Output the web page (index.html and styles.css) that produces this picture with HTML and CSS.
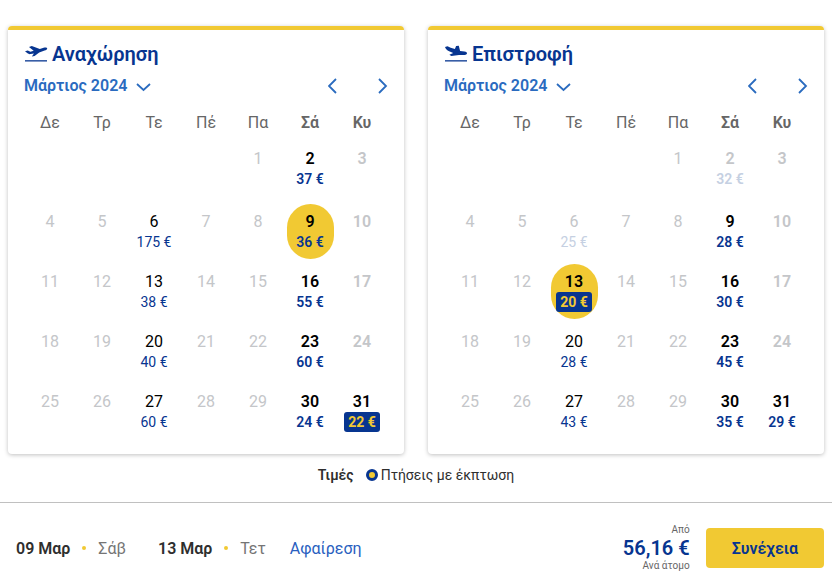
FILE: index.html
```
<!DOCTYPE html>
<html lang="el">
<head>
    <meta charset="utf-8">
    <meta name="viewport" content="width=device-width, initial-scale=1">
    <title>Επιλογή ημερομηνιών</title>
    <link rel="stylesheet" href="styles.css">
</head>
<body>
    <main class="calendars">
        <section class="panel">
            <h2 class="panel-title">
                <svg class="plane" viewBox="0 0 24 18" aria-hidden="true"><path d="M1 6.300l2.800-.7 2.600 1.200 3.300-1L5 1.900l2.800-.9 8 3.100 3.800-1.300c1.600-.5 3.300-.4 3.600.4.2 1-1.200 1.900-2.600 2.400l-5.400 2-4.600 3.400-2.700.5 2-3-3.300.6c-1.600.2-2.300-.2-3.100-.8z"/><path d="M1 15.200h22v1.300H1z"/></svg>
                Αναχώρηση
            </h2>
            <div class="month-bar">
                <div class="month">
                    <select class="month-select" aria-label="Μήνας αναχώρησης"><option>Μάρτιος 2024</option></select>
                    <svg class="chevron" viewBox="0 0 16 10" aria-hidden="true"><path d="M1 2l6.500 6L14 2"/></svg>
                </div>
                <div class="arrows">
                    <button class="arrow" aria-label="Προηγούμενος μήνας"><svg viewBox="0 0 10 16" aria-hidden="true"><path d="M8 1L1 8l7 7"/></svg></button>
                    <button class="arrow" aria-label="Επόμενος μήνας"><svg viewBox="0 0 10 16" aria-hidden="true"><path d="M1 1l7 7-7 7"/></svg></button>
                </div>
            </div>
            <table class="days">
                <thead>
                    <tr><th>Δε</th><th>Τρ</th><th>Τε</th><th>Πέ</th><th>Πα</th><th>Σά</th><th>Κυ</th></tr>
                </thead>
                <tbody>
                    <tr>
                        <td></td><td></td><td></td><td></td><td>1</td>
                        <td><button class="day">2<span class="price">37 €</span></button></td>
                        <td>3</td>
                    </tr>
                    <tr>
                        <td>4</td><td>5</td>
                        <td><button class="day">6<span class="price">175 €</span></button></td>
                        <td>7</td><td>8</td>
                        <td><button class="day selected" aria-pressed="true">9<span class="price">36 €</span></button></td>
                        <td>10</td>
                    </tr>
                    <tr>
                        <td>11</td><td>12</td>
                        <td><button class="day">13<span class="price">38 €</span></button></td>
                        <td>14</td><td>15</td>
                        <td><button class="day">16<span class="price">55 €</span></button></td>
                        <td>17</td>
                    </tr>
                    <tr>
                        <td>18</td><td>19</td>
                        <td><button class="day">20<span class="price">40 €</span></button></td>
                        <td>21</td><td>22</td>
                        <td><button class="day">23<span class="price">60 €</span></button></td>
                        <td>24</td>
                    </tr>
                    <tr>
                        <td>25</td><td>26</td>
                        <td><button class="day">27<span class="price">60 €</span></button></td>
                        <td>28</td><td>29</td>
                        <td><button class="day">30<span class="price">24 €</span></button></td>
                        <td><button class="day">31<span class="price deal">22 €</span></button></td>
                    </tr>
                </tbody>
            </table>
        </section>

        <section class="panel">
            <h2 class="panel-title">
                <svg class="plane" viewBox="0 0 24 18" aria-hidden="true"><path d="M1 2l2.500-.8 3.200 1.500 4.200 1.400 1.200-3 2.700-.3 1.300 5.200 4.400.4c1.700.2 2.700 1.100 2.500 2-.3 1-2 1.500-3.800 1.500l-4.200.1-7.700.9-1.900-1.200 3.800-1.700-4.600-1.900C2.700 5.200 1.600 3.700 1 2z"/><path d="M1 15.200h22v1.300H1z"/></svg>
                Επιστροφή
            </h2>
            <div class="month-bar">
                <div class="month">
                    <select class="month-select" aria-label="Μήνας επιστροφής"><option>Μάρτιος 2024</option></select>
                    <svg class="chevron" viewBox="0 0 16 10" aria-hidden="true"><path d="M1 2l6.500 6L14 2"/></svg>
                </div>
                <div class="arrows">
                    <button class="arrow" aria-label="Προηγούμενος μήνας"><svg viewBox="0 0 10 16" aria-hidden="true"><path d="M8 1L1 8l7 7"/></svg></button>
                    <button class="arrow" aria-label="Επόμενος μήνας"><svg viewBox="0 0 10 16" aria-hidden="true"><path d="M1 1l7 7-7 7"/></svg></button>
                </div>
            </div>
            <table class="days">
                <thead>
                    <tr><th>Δε</th><th>Τρ</th><th>Τε</th><th>Πέ</th><th>Πα</th><th>Σά</th><th>Κυ</th></tr>
                </thead>
                <tbody>
                    <tr>
                        <td></td><td></td><td></td><td></td><td>1</td>
                        <td><button class="day" disabled>2<span class="price">32 €</span></button></td>
                        <td>3</td>
                    </tr>
                    <tr>
                        <td>4</td><td>5</td>
                        <td><button class="day" disabled>6<span class="price">25 €</span></button></td>
                        <td>7</td><td>8</td>
                        <td><button class="day">9<span class="price">28 €</span></button></td>
                        <td>10</td>
                    </tr>
                    <tr>
                        <td>11</td><td>12</td>
                        <td><button class="day selected" aria-pressed="true">13<span class="price deal">20 €</span></button></td>
                        <td>14</td><td>15</td>
                        <td><button class="day">16<span class="price">30 €</span></button></td>
                        <td>17</td>
                    </tr>
                    <tr>
                        <td>18</td><td>19</td>
                        <td><button class="day">20<span class="price">28 €</span></button></td>
                        <td>21</td><td>22</td>
                        <td><button class="day">23<span class="price">45 €</span></button></td>
                        <td>24</td>
                    </tr>
                    <tr>
                        <td>25</td><td>26</td>
                        <td><button class="day">27<span class="price">43 €</span></button></td>
                        <td>28</td><td>29</td>
                        <td><button class="day">30<span class="price">35 €</span></button></td>
                        <td><button class="day">31<span class="price">29 €</span></button></td>
                    </tr>
                </tbody>
            </table>
        </section>
    </main>

    <div class="legend">
        <b>Τιμές</b>
        <span class="legend-item"><i class="ring"></i>Πτήσεις με έκπτωση</span>
    </div>

    <footer class="summary">
        <div class="dates">
            <div class="date"><b>09 Μαρ</b><i class="dot"></i><span>Σάβ</span></div>
            <div class="date"><b>13 Μαρ</b><i class="dot"></i><span>Τετ</span></div>
            <a class="remove" href="#">Αφαίρεση</a>
        </div>
        <div class="total">
            <small>Από</small>
            <strong>56,16 €</strong>
            <small>Ανά άτομο</small>
        </div>
        <button class="continue">Συνέχεια</button>
    </footer>
</body>
</html>
```
FILE: styles.css
```
* {
    box-sizing: border-box;
}

body {
    margin: 0;
    background-color: #fff;
    color: #2e2e2e;
    font-family: Roboto, "Liberation Sans", sans-serif;
    font-size: 16px;
}

button, select {
    font: inherit;
    border: 0;
    padding: 0;
    background: none;
    cursor: pointer;
}

.calendars {
    display: grid;
    grid-template-columns: 1fr 1fr;
    gap: 24px;
    padding: 26px 8px 0;
}

/* calendar panel */
.panel {
    padding: 12px 16px 10px;
    border-top: 4px solid #f1c933;
    border-radius: 4px;
    box-shadow: 0 1px 4px rgba(0, 0, 0, 0.25);
}

.panel-title {
    display: flex;
    align-items: center;
    gap: 4px;
    margin: 0 0 4px;
    color: #073590;
    font-size: 20px;
    font-weight: 600;
    line-height: 24px;
}

.plane {
    width: 24px;
    height: 18px;
    fill: #073590;
}

.month-bar {
    display: flex;
    justify-content: space-between;
    align-items: center;
    height: 32px;
}

.month {
    position: relative;
}

.month-select {
    appearance: none;
    padding-right: 24px;
    color: #2a6bbf;
    font-weight: 600;
    line-height: 24px;
}

.chevron {
    position: absolute;
    right: 0;
    top: 8px;
    width: 16px;
    height: 10px;
    pointer-events: none;
}

.chevron path, .arrow path {
    fill: none;
    stroke: #2a6bbf;
    stroke-width: 1.8;
}

.arrows {
    display: flex;
    gap: 40px;
}

.arrow svg {
    display: block;
    width: 10px;
    height: 16px;
}

/* days table */
.days {
    width: 100%;
    table-layout: fixed;
    border-collapse: collapse;
    text-align: center;
}

.days th {
    height: 39px;
    padding: 2px 0 0;
    color: #666;
    font-weight: 400;
}

.days td {
    height: 60px;
    padding: 7px 0 0;
    color: #c4c6c9;
    line-height: 21px;
    vertical-align: top;
}

.days tbody tr:first-child td {
    height: 63px;
}

.days tr > :nth-child(n+6) {
    font-weight: 600;
}

.days td:has(.day) {
    padding: 0;
}

.day {
    display: block;
    width: 47px;
    height: 55px;
    margin: 0 auto;
    border-radius: 24px;
    color: #000;
    line-height: 21px;
}

.day.selected {
    background-color: #f1c933;
    font-weight: 600;
}

.day:disabled {
    color: #c4c6c9;
}

.price {
    display: block;
    width: max-content;
    margin: 0 auto;
    color: #073590;
    font-size: 14px;
    line-height: 20px;
}

.day:disabled .price {
    color: #c5d0e2;
}

.deal {
    padding: 0 4px;
    border-radius: 3px;
    background-color: #073590;
    color: #f1c933;
    font-weight: 700;
}

/* legend */
.legend {
    display: flex;
    justify-content: center;
    gap: 12px;
    padding: 11px 0 17px;
    font-size: 14px;
    line-height: 20px;
}

.legend b, .date b {
    font-weight: 600;
}

.legend-item {
    display: flex;
    align-items: center;
    gap: 3px;
}

.ring {
    width: 12px;
    height: 12px;
    border: 3px solid #073590;
    border-radius: 50%;
    background-color: #f1c933;
}

/* bottom bar */
.summary {
    display: flex;
    align-items: center;
    gap: 16px;
    padding: 20px 8px 0 16px;
    border-top: 1px solid #c0c0c0;
}

.dates {
    display: flex;
    flex: 1;
}

.date {
    display: flex;
    align-items: center;
    gap: 12px;
    margin-right: 32px;
}

.date:nth-child(2) {
    margin-right: 24px;
}

.date span {
    color: #757575;
}

.dot {
    width: 4px;
    height: 4px;
    border-radius: 50%;
    background-color: #f1c933;
}

.remove {
    color: #2a5fc0;
    text-decoration: none;
}

.total {
    display: flex;
    flex-direction: column;
    align-items: flex-end;
}

.total small {
    color: #666;
    font-size: 10px;
    line-height: 14px;
}

.total strong {
    color: #073590;
    font-size: 20px;
    font-weight: 600;
    line-height: 22px;
}

.continue {
    height: 40px;
    padding: 0 26px;
    border-radius: 4px;
    background-color: #f1c933;
    color: #073590;
    font-weight: 600;
}
```
